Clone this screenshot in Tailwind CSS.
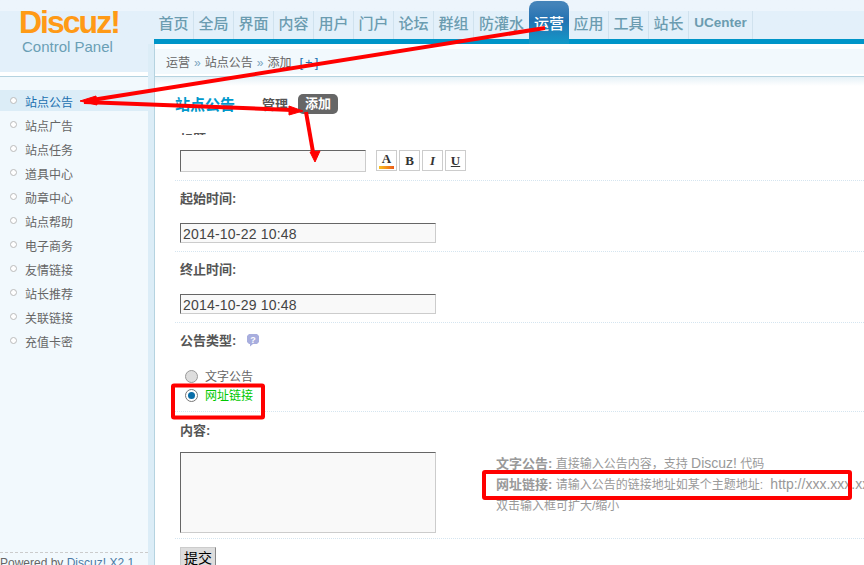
<!DOCTYPE html>
<html lang="zh-CN">
<head>
  <meta charset="UTF-8" />
  <title>Discuz! Control Panel</title>
  <script src="https://cdn.jsdelivr.net/npm/@tailwindcss/browser@4"></script>
</head>
<body class="relative w-[864px] h-[565px] overflow-hidden bg-white text-xs text-[#666] font-['Liberation_Sans','Noto_Sans_CJK_SC',sans-serif]">

  <!-- top bar -->
  <header class="flex h-11 bg-gradient-to-b from-[#edf5fc] from-[25%] to-[#e3f0fa] to-[25%]">
    <div class="w-[154px] shrink-0 pl-[19px] pt-[7px]">
      <div class="h-[30px] text-[32px] leading-[30px] font-bold tracking-[-2px] text-[#ff9a16]">Discuz!</div>
    </div>
    <nav class="flex flex-1 h-11 border-b-[5px] border-[#0095c8] pt-[11px] text-[15px] font-medium text-[#6b9cb0]">
      <a class="w-10 h-7 leading-[25px] text-center border-r border-[#d0e2ee]">首页</a>
      <a class="w-10 h-7 leading-[25px] text-center border-r border-[#d0e2ee]">全局</a>
      <a class="w-10 h-7 leading-[25px] text-center border-r border-[#d0e2ee]">界面</a>
      <a class="w-10 h-7 leading-[25px] text-center border-r border-[#d0e2ee]">内容</a>
      <a class="w-10 h-7 leading-[25px] text-center border-r border-[#d0e2ee]">用户</a>
      <a class="w-10 h-7 leading-[25px] text-center border-r border-[#d0e2ee]">门户</a>
      <a class="w-10 h-7 leading-[25px] text-center border-r border-[#d0e2ee]">论坛</a>
      <a class="w-10 h-7 leading-[25px] text-center border-r border-[#d0e2ee]">群组</a>
      <a class="w-[55px] h-7 leading-[25px] text-center">防灌水</a>
      <a class="w-10 h-[43px] -mt-2.5 pt-2.5 leading-[25px] text-center text-white rounded-t-lg bg-gradient-to-b from-[#4383b9] from-[8%] via-[#2272b2] via-[45%] to-[#0f9ac9]">运营</a>
      <a class="w-10 h-7 leading-[25px] text-center border-r border-[#d0e2ee]">应用</a>
      <a class="w-10 h-7 leading-[25px] text-center border-r border-[#d0e2ee]">工具</a>
      <a class="w-10 h-7 leading-[25px] text-center border-r border-[#d0e2ee]">站长</a>
      <a class="w-16 h-7 leading-[23px] text-center border-r border-[#d0e2ee] text-[13.500px] font-bold">UCenter</a>
    </nav>
  </header>

  <div class="flex h-[521px]">
    <!-- sidebar -->
    <aside class="relative flex w-[155px] shrink-0 border-r border-[#b5d3e0]">
      <div class="w-[148px] bg-[#f2f9fd]">
        <div class="h-7 pl-[22px] bg-[#e3f0fa] text-[15px] leading-[6px] text-[#6a9fb5]">Control Panel</div>
        <div class="h-1 bg-white"></div>
        <div class="h-px bg-[#b5d3e0]"></div>
        <ul class="pt-[13px]">
          <li class="flex items-center h-[21px] mb-[3px] pl-[10px] pt-1 gap-2 bg-[#dcedf7] text-[#2070b0]"><i class="-mt-1 w-[7px] h-[7px] rounded-full border border-[#bbb] bg-white"></i>站点公告</li>
          <li class="flex items-center h-[21px] mb-[3px] pl-[10px] pt-1 gap-2"><i class="-mt-1 w-[7px] h-[7px] rounded-full border border-[#bbb] bg-white"></i>站点广告</li>
          <li class="flex items-center h-[21px] mb-[3px] pl-[10px] pt-1 gap-2"><i class="-mt-1 w-[7px] h-[7px] rounded-full border border-[#bbb] bg-white"></i>站点任务</li>
          <li class="flex items-center h-[21px] mb-[3px] pl-[10px] pt-1 gap-2"><i class="-mt-1 w-[7px] h-[7px] rounded-full border border-[#bbb] bg-white"></i>道具中心</li>
          <li class="flex items-center h-[21px] mb-[3px] pl-[10px] pt-1 gap-2"><i class="-mt-1 w-[7px] h-[7px] rounded-full border border-[#bbb] bg-white"></i>勋章中心</li>
          <li class="flex items-center h-[21px] mb-[3px] pl-[10px] pt-1 gap-2"><i class="-mt-1 w-[7px] h-[7px] rounded-full border border-[#bbb] bg-white"></i>站点帮助</li>
          <li class="flex items-center h-[21px] mb-[3px] pl-[10px] pt-1 gap-2"><i class="-mt-1 w-[7px] h-[7px] rounded-full border border-[#bbb] bg-white"></i>电子商务</li>
          <li class="flex items-center h-[21px] mb-[3px] pl-[10px] pt-1 gap-2"><i class="-mt-1 w-[7px] h-[7px] rounded-full border border-[#bbb] bg-white"></i>友情链接</li>
          <li class="flex items-center h-[21px] mb-[3px] pl-[10px] pt-1 gap-2"><i class="-mt-1 w-[7px] h-[7px] rounded-full border border-[#bbb] bg-white"></i>站长推荐</li>
          <li class="flex items-center h-[21px] mb-[3px] pl-[10px] pt-1 gap-2"><i class="-mt-1 w-[7px] h-[7px] rounded-full border border-[#bbb] bg-white"></i>关联链接</li>
          <li class="flex items-center h-[21px] mb-[3px] pl-[10px] pt-1 gap-2"><i class="-mt-1 w-[7px] h-[7px] rounded-full border border-[#bbb] bg-white"></i>充值卡密</li>
        </ul>
      </div>
      <div class="w-[6px] bg-[#dcedf7]"></div>
      <div class="absolute left-0 top-[508px] w-[148px] border-t border-dashed border-[#ccc] pt-[2px] text-[12px] leading-4 whitespace-nowrap overflow-hidden">Powered by <span class="text-[#4a7aa5]">Discuz! X2.1</span></div>
    </aside>

    <!-- main column -->
    <main class="flex-1 min-w-0">
      <div class="h-[5px] bg-white"></div>
      <div class="h-[25px] pl-[11px] bg-[#f2f9fd] leading-[27px] whitespace-nowrap">运营<span class="mx-1 text-[#7aa5c0]">»</span>站点公告<span class="mx-1 text-[#7aa5c0]">»</span>添加<span class="ml-2 text-[13px] tracking-[2px] text-[#2070b0]">[+]</span></div>
      <div class="h-0.5 bg-white"></div>
      <div class="h-2.5 border-t border-[#b5d3e0] bg-gradient-to-b from-[#e6f1f7] to-white"></div>

      <div class="flex items-center h-5 ml-5 mt-2">
        <h3 class="w-[87px] pt-px text-[15px] font-bold text-[#0099cc]">站点公告</h3>
        <span class="w-9 pt-px text-[13px] font-bold text-[#555]">管理</span>
        <span class="w-10 h-5 leading-5 text-center rounded-[5px] bg-[#666] text-white text-[13px] font-bold">添加</span>
      </div>

      <div class="ml-5 mt-[18px] h-[3px] overflow-hidden font-bold text-[13px] text-[#555] pl-[5px] leading-4">标题:</div>

      <div class="flex gap-2.5 ml-[25px] mt-[15px] h-[30px]">
        <div class="w-[186px] h-[22px] border border-[#ccc] border-t-[#666] border-l-[#666] bg-[#f9f9f9]"></div>
        <div class="flex gap-0.5">
          <span class="relative w-[21px] h-[21px] border border-[#ccc] text-center text-[13px] leading-[16px] font-bold font-['Liberation_Serif',serif] text-[#333]">A<i class="absolute left-[2px] right-[2px] bottom-[1px] h-[3px] bg-gradient-to-r from-[#f9c020] to-[#ea5a1a]"></i></span>
          <span class="w-[21px] h-[21px] border border-[#ccc] text-center text-[13px] leading-[19px] font-bold font-['Liberation_Serif',serif] text-[#333]">B</span>
          <span class="w-[21px] h-[21px] border border-[#ccc] text-center text-[13px] leading-[19px] font-bold italic font-['Liberation_Serif',serif] text-[#333]">I</span>
          <span class="w-[21px] h-[21px] border border-[#ccc] text-center text-[13px] leading-[19px] font-bold underline font-['Liberation_Serif',serif] text-[#333]">U</span>
        </div>
      </div>

      <div class="ml-5 h-[71px] border-t border-dotted border-[#d5e5f0] pl-[5px]">
        <div class="mt-[10px] h-4 leading-4 text-[13px] font-bold text-[#555]">起始时间:</div>
        <div class="w-[256px] h-5 mt-4 px-[2px] border border-[#ccc] border-t-[#666] border-l-[#666] bg-[#f9f9f9] text-[14px] tracking-[0.2px] leading-5 text-[#444]">2014-10-22 10:48</div>
      </div>

      <div class="ml-5 h-[71px] border-t border-dotted border-[#d5e5f0] pl-[5px]">
        <div class="mt-[10px] h-4 leading-4 text-[13px] font-bold text-[#555]">终止时间:</div>
        <div class="w-[256px] h-5 mt-4 px-[2px] border border-[#ccc] border-t-[#666] border-l-[#666] bg-[#f9f9f9] text-[14px] tracking-[0.2px] leading-5 text-[#444]">2014-10-29 10:48</div>
      </div>

      <div class="ml-5 h-[89px] border-t border-dotted border-[#d5e5f0] pl-[5px]">
        <div class="flex items-center gap-[10px] mt-[10px] h-4 leading-4 text-[13px] font-bold text-[#555]">
          公告类型:
          <svg width="14" height="14" viewBox="0 0 14 14" class="-mt-[3px]">
            <path d="M3 1h8l2 2v6l-2 2H7l-3 2.500V11H3L1 9V3z" fill="#a8aede"/>
            <text x="7" y="9.500" text-anchor="middle" font-size="9" font-weight="700" fill="#fff">?</text>
          </svg>
        </div>
        <div class="flex items-center gap-[7px] mt-[18px] h-[19px] pl-[5px]">
          <i class="w-[13px] h-[13px] rounded-full border border-[#999] bg-[#ddd]"></i>文字公告
        </div>
        <div class="flex items-center gap-[7px] h-[19px] pl-[5px] text-[#00c800]">
          <i class="w-[13px] h-[13px] rounded-full border border-[#777] bg-white p-[2px]"><i class="block w-full h-full rounded-full bg-[#0a6ea8]"></i></i>网址链接
        </div>
      </div>

      <div class="flex ml-5 h-[127px] border-t border-dotted border-[#d5e5f0] pl-[5px]">
        <div class="w-[316px] shrink-0">
          <div class="mt-[11px] h-4 leading-4 text-[13px] font-bold text-[#555]">内容:</div>
          <div class="w-[256px] h-[81px] mt-[13px] border border-[#ccc] border-t-[#666] border-l-[#666] bg-[#f9f9f9]"></div>
        </div>
        <div class="pt-[42px] text-[#999] whitespace-nowrap">
          <p class="h-[21px] leading-[21px]"><b class="text-[13px] leading-none">文字公告:</b> 直接输入公告内容&#65292;支持 <span class="text-[14px] leading-none">Discuz!</span> 代码</p>
          <p class="h-[21px] leading-[21px]"><b class="text-[13px] leading-none">网址链接:</b> 请输入公告的链接地址如某个主题地址: <span class="ml-1 text-[14px] leading-none">http://xxx.xxx.xxx</span></p>
          <p class="h-[21px] leading-[21px]">双击输入框可扩大/缩小</p>
        </div>
      </div>

      <div class="ml-5 border-t border-dotted border-[#d5e5f0] pl-[5px] pt-2">
        <button class="block w-9 h-[22px] bg-[#ddd] border border-[#ccc] border-r-[#888] text-[14px] leading-5 text-black">提交</button>
      </div>
    </main>
  </div>

  <!-- red annotations drawn over the screenshot -->
  <svg class="absolute inset-0 pointer-events-none" width="864" height="565" viewBox="0 0 864 565">
    <g fill="red" stroke="red" stroke-linejoin="round">
      <path d="M545 28 L92 100" stroke-width="4" fill="none"/>
      <path d="M80 101 L96 96 L97 105 Z" stroke-width="1"/>
      <path d="M84 102 L292 110" stroke-width="4" fill="none"/>
      <path d="M303 111 L289 106 L289 115 Z" stroke-width="1"/>
      <path d="M306 112 L313 152" stroke-width="4" fill="none"/>
      <path d="M315 162 L310 152 L320 151 Z" stroke-width="1"/>
    </g>
    <rect x="173" y="385.500" width="90" height="32" rx="1" fill="none" stroke="red" stroke-width="4"/>
    <rect x="484" y="472" width="366" height="26" rx="1" fill="none" stroke="red" stroke-width="4"/>
  </svg>
</body>
</html>
